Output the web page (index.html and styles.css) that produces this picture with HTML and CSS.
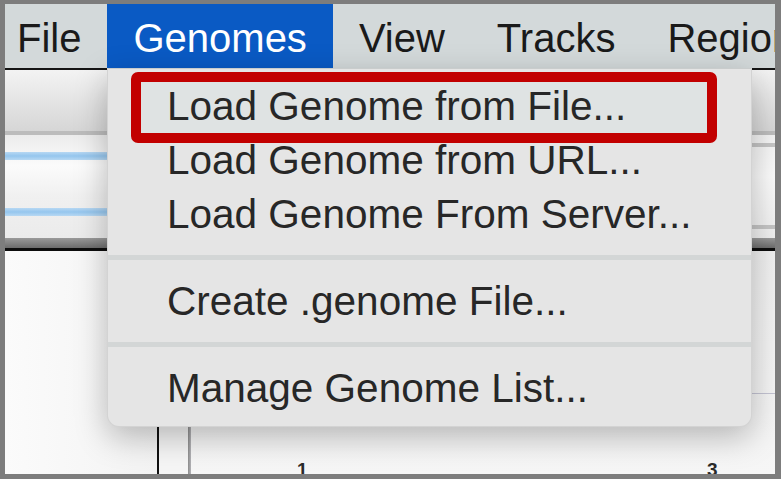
FILE: index.html
```html
<!DOCTYPE html>
<html>
<head>
<meta charset="utf-8">
<title>Genomes menu</title>
<link rel="stylesheet" href="styles.css">
</head>
<body>
<div class="frame">
  <nav class="menubar">
    <span class="mitem first">File</span>
    <span class="mitem active">Genomes</span>
    <span class="mitem">View</span>
    <span class="mitem">Tracks</span>
    <span class="mitem">Regions</span>
  </nav>
  <div class="app">
    <div class="toolbar"></div>
    <div class="header">
      <div class="names">
        <div class="hl"></div>
        <div class="hl"></div>
      </div>
      <div class="tracks">
        <div class="gl"></div>
        <div class="gl"></div>
      </div>
    </div>
    <div class="band"></div>
    <div class="data">
      <div class="col-name"></div>
      <div class="vline dark"></div>
      <div class="col-attr"></div>
      <div class="vline grey"></div>
      <div class="col-data">
        <div class="hline"></div>
        <span class="tick t1">1</span>
        <span class="tick t3">3</span>
      </div>
    </div>
  </div>
  <div class="dropdown">
    <div class="highlight"></div>
    <div class="ditem">Load Genome from File...</div>
    <div class="ditem">Load Genome from URL...</div>
    <div class="ditem">Load Genome From Server...</div>
    <div class="sep"></div>
    <div class="ditem">Create .genome File...</div>
    <div class="sep"></div>
    <div class="ditem">Manage Genome List...</div>
  </div>
</div>
</body>
</html>
```
FILE: styles.css
```css
* { box-sizing: border-box; }
html, body { margin: 0; padding: 0; background: #ffffff; }
body { width: 781px; height: 479px; overflow: hidden; }

.frame {
  position: relative;
  width: 781px;
  height: 479px;
  border-style: solid;
  border-color: #7d7d7d;
  border-width: 4px 6px 5px 5px;
  overflow: hidden;
  font-family: "Liberation Sans", Arial, sans-serif;
  display: flex;
  flex-direction: column;
  background: #f4f4f4;
}

.menubar {
  flex: 0 0 64px;
  display: flex;
  white-space: nowrap;
  background: #d3d9da;
  font-size: 40px;
  color: #1a1a1a;
}
.mitem {
  padding: 5px 26px 0;
  line-height: 58px;
  flex: 0 0 auto;
}
.mitem.first { padding-left: 12px; }
.mitem.active { background: #0a5ac4; color: #ffffff; }

.app { flex: 1; display: flex; flex-direction: column; }

.toolbar {
  flex: 0 0 67px;
  border-top: 2px solid #151515;
  border-bottom: 4px solid #bcbcbc;
  background: linear-gradient(180deg, #f3f3f3 0%, #e6e6e6 45%, #d6d6d6 100%);
}

.header {
  flex: 0 0 103px;
  display: grid;
  grid-template-columns: 102px 1fr;
}
.names {
  display: flex;
  flex-direction: column;
  padding-top: 17px;
  gap: 48px;
  background: linear-gradient(180deg, #ececec 0%, #fbfbfb 30%, #f0f0f0 60%, #ebebeb 100%);
}
.names .hl {
  height: 8px;
  background: linear-gradient(180deg, #b7d8f3, #95c6ee 50%, #b7d8f3);
}
.tracks {
  display: flex;
  flex-direction: column;
  padding-top: 8px;
  gap: 78px;
  background: linear-gradient(180deg, #f2f2f2, #fafafa 40%, #eeeeee);
}
.tracks .gl { height: 4px; background: #c4c4c4; }

.band {
  flex: 0 0 13px;
  border-bottom: 3px solid #0d0d0d;
  background: linear-gradient(180deg, #9a9a9a, #6c6c6c);
}

.data {
  flex: 1;
  display: grid;
  grid-template-columns: 152px 2px 29px 3px 1fr;
}
.col-name { background: linear-gradient(90deg, #fbfbfb, #f3f3f3); }
.col-attr { background: #f5f5f5; }
.vline.dark { background: #111111; }
.vline.grey { background: linear-gradient(90deg, #8c8c8c, #b4b4b8); }
.col-data {
  position: relative;
  background: linear-gradient(180deg, #efefef 0%, #f6f6f6 100%);
}
.hline {
  margin-top: 142px;
  height: 1px;
  background: #c3c3d2;
}
.tick {
  position: absolute;
  top: 208px;
  font-size: 19px;
  font-weight: bold;
  color: #2a2a2a;
}
.t1 { left: 106px; }
.t3 { left: 516px; }

.dropdown {
  position: absolute;
  left: 102px;
  top: 64px;
  width: 645px;
  padding: 10px 0 11px;
  background: #e5e5e5;
  border: 1px solid rgba(0, 0, 0, 0.08);
  border-top-color: #c9cccc;
  border-radius: 0 0 12px 12px;
  box-shadow: 0 10px 32px rgba(0, 0, 0, 0.26);
  font-size: 40.5px;
  color: #272727;
}
.highlight {
  position: absolute;
  left: 23px;
  top: 3px;
  width: 586px;
  height: 71px;
  border: 10px solid #c20000;
  border-radius: 7px;
  background: #dfe3e3;
}
.ditem {
  position: relative;
  height: 54px;
  line-height: 54px;
  padding-left: 59px;
  white-space: nowrap;
}
.sep {
  height: 5px;
  margin: 14px 0;
  background: #d3d6d6;
}
```
